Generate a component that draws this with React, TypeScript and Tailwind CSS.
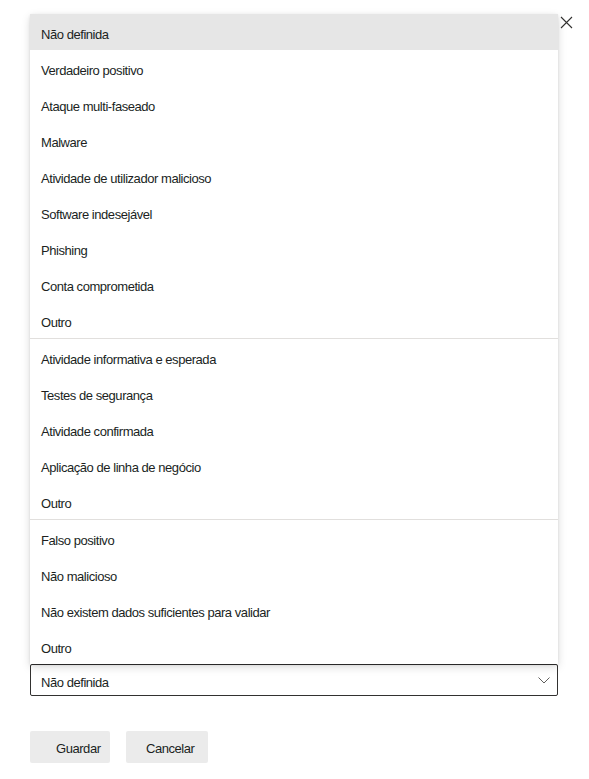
import React from "react";

const groups: string[][] = [
  [
    "Não definida",
    "Verdadeiro positivo",
    "Ataque multi-faseado",
    "Malware",
    "Atividade de utilizador malicioso",
    "Software indesejável",
    "Phishing",
    "Conta comprometida",
    "Outro",
  ],
  [
    "Atividade informativa e esperada",
    "Testes de segurança",
    "Atividade confirmada",
    "Aplicação de linha de negócio",
    "Outro",
  ],
  ["Falso positivo", "Não malicioso", "Não existem dados suficientes para validar", "Outro"],
];

export default function App() {
  return (
    <div
      className="relative w-[589px] h-[779px] bg-white text-[#201f1e] text-[13px] tracking-[-0.45px]"
      style={{ fontFamily: '"Liberation Sans", Arial, sans-serif' }}
    >
      <button className="absolute left-[560px] top-[16px] w-[13px] h-[13px] text-[#323130]">
        <svg viewBox="0 0 13 13" width="13" height="13" fill="none" stroke="currentColor" strokeWidth="1.1">
          <path d="M1 1 L12 12 M12 1 L1 12" />
        </svg>
      </button>

      <div className="pt-[14px] pl-[30px] w-[558px]">
        <ul className="relative z-10 bg-white rounded-t-[2px] shadow-[0_3px_10px_rgba(0,0,0,0.14),0_1px_3px_rgba(0,0,0,0.1)]">
          {groups.map((items, gi) => (
            <li key={gi} className={gi > 0 ? "border-t border-[#e1dfdd]" : ""}>
              {items.map((label, i) => (
                <div
                  key={label + i}
                  className={`h-[36px] flex items-center pl-[11px] pt-[5px] ${gi === 0 && i === 0 ? "bg-[#e6e6e6]" : ""}`}
                >
                  {label}
                </div>
              ))}
            </li>
          ))}
        </ul>

        <div className="h-[32px] border border-[#323130] rounded-[2px] flex items-center justify-between pl-[10px] pr-[7px]">
          <span className="pt-[5px]">Não definida</span>
          <svg viewBox="0 0 12 7" width="12" height="7" fill="none" stroke="#605e5c" strokeWidth="1">
            <path d="M0.5 0.5 L6 6 L11.5 0.5" />
          </svg>
        </div>

        <div className="flex gap-[16px] mt-[35px]">
          <button className="w-[80px] h-[32px] bg-[#ebebeb] rounded-[2px] text-[#201f1e] text-left pl-[26px] pt-[3px]">
            Guardar
          </button>
          <button className="w-[82px] h-[32px] bg-[#ebebeb] rounded-[2px] text-[#201f1e] text-left pl-[20px] pt-[3px]">
            Cancelar
          </button>
        </div>
      </div>
    </div>
  );
}
